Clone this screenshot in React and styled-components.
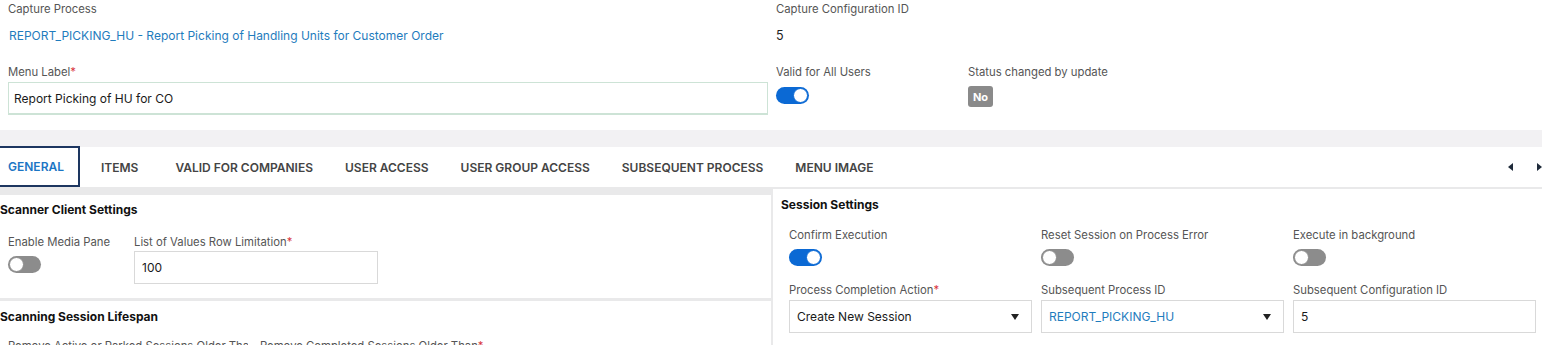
import React from "react";
import styled, { createGlobalStyle } from "styled-components";

const GlobalStyle = createGlobalStyle`
  html, body {
    margin: 0;
    padding: 0;
    background: #ffffff;
    font-family: Inter, "Noto Sans", "Liberation Sans", sans-serif;
    overflow: hidden;
  }
`;

const Page = styled.div`
  width: 1542px;
  height: 345px;
  overflow: hidden;
  background: #ffffff;
`;

const Header = styled.div`
  display: grid;
  grid-template-columns: 760px 1fr;
  column-gap: 8px;
  row-gap: 17px;
  padding: 1px 0 15px 8px;
  height: 114px;
`;

const Field = styled.div`
  display: flex;
  flex-direction: column;
  width: ${(p) => p.width || "auto"};
`;

const Label = styled.div`
  font-size: 11.3px;
  line-height: 16px;
  color: #555555;
  white-space: nowrap;
  overflow: hidden;
`;

const Req = styled.span`
  color: #d9363e;
`;

const Value = styled.div`
  margin-top: 8px;
  font-size: ${(p) => (p.link ? "12px" : "12.5px")};
  line-height: 22px;
  color: ${(p) => (p.link ? "#1f7cbd" : "#222222")};
  padding-left: ${(p) => (p.link ? "1px" : "0")};
`;

const Input = styled.div`
  box-sizing: border-box;
  margin-top: ${(p) => p.mt || "2px"};
  height: 33px;
  width: ${(p) => p.width || "100%"};
  border: 1px solid ${(p) => (p.focused ? "#cde3d6" : "#d9d9d9")};
  border-bottom-width: ${(p) => (p.focused ? "2px" : "1px")};
  display: flex;
  align-items: center;
  justify-content: space-between;
  padding: 0 12px 0 ${(p) => p.pl || "7px"};
  font-size: 12px;
  color: ${(p) => (p.link ? "#1f7cbd" : "#1a1a1a")};
  background: #fff;
`;

const Caret = styled.span`
  width: 0;
  height: 0;
  border-left: 4px solid transparent;
  border-right: 4px solid transparent;
  border-top: 6px solid #222;
`;

const SubRow = styled.div`
  display: flex;
`;

const Toggle = styled.div`
  box-sizing: border-box;
  margin-top: ${(p) => p.mt || "7px"};
  width: 33px;
  height: 17px;
  border-radius: 9px;
  background: ${(p) => (p.on ? "#0b69d4" : "#8c8c8c")};
  position: relative;

  &::after {
    content: "";
    position: absolute;
    top: 1px;
    ${(p) => (p.on ? "right: 1px;" : "left: 1px;")}
    width: 15px;
    height: 15px;
    box-sizing: border-box;
    border-radius: 50%;
    background: #fff;
    border: 1px solid ${(p) => (p.on ? "#0b69d4" : "#8c8c8c")};
  }
`;

const Badge = styled.div`
  margin-top: 6px;
  width: 25px;
  height: 21px;
  border-radius: 3px;
  background: #8a8a8a;
  color: #fff;
  font-size: 11px;
  font-weight: 700;
  display: flex;
  align-items: center;
  justify-content: center;
`;

const Strip = styled.div`
  height: 17px;
  background: #f2f1f3;
`;

const TabBar = styled.div`
  height: 40px;
  display: flex;
  align-items: stretch;
`;

const Tabs = styled.div`
  display: flex;
  margin-left: -8px;
`;

const Tab = styled.div`
  box-sizing: border-box;
  display: flex;
  align-items: center;
  padding: 0 ${(p) => (p.active ? "14px" : "16px")} 0 16px;
  margin-right: ${(p) => p.mr || "0"};
  border: ${(p) => (p.active ? "2px solid #1d3660" : "none")};
  border-left: none;
  margin-top: ${(p) => (p.active ? "-1px" : "0")};
  height: ${(p) => (p.active ? "41px" : "40px")};
  font-size: 12px;
  font-weight: 600;
  color: ${(p) => (p.active ? "#1b75c4" : "#444444")};
  white-space: nowrap;
`;

const Arrows = styled.div`
  margin-left: auto;
  display: flex;
  align-items: center;
  gap: 24px;
`;

const Arrow = styled.span`
  width: 0;
  height: 0;
  border-top: 4px solid transparent;
  border-bottom: 4px solid transparent;
  ${(p) =>
    p.dir === "left"
      ? "border-right: 5px solid #1e2a3a;"
      : "border-left: 5px solid #1e2a3a;"}
`;

const Content = styled.div`
  display: grid;
  grid-template-columns: 771px 1fr;
  column-gap: 2px;
  background: #e9e9ea;
  padding-top: 2px;
  height: 200px;
`;

const Column = styled.div`
  display: flex;
  flex-direction: column;
  gap: 3px;
  padding-top: ${(p) => p.pt || "0"};
`;

const Panel = styled.div`
  background: #fff;
  padding: ${(p) => p.pad || "8px 8px 12px 8px"};
  height: ${(p) => p.h || "auto"};
  flex: ${(p) => (p.grow ? 1 : "none")};
  box-sizing: border-box;
`;

const Title = styled.div`
  font-size: 12px;
  font-weight: 700;
  color: #111;
  line-height: 16px;
`;

const FieldRow = styled.div`
  display: flex;
  gap: ${(p) => p.gap || "9px"};
  margin-top: ${(p) => p.mt || "16px"};
  padding-left: ${(p) => p.pl || "0"};
`;

export default function App() {
  return (
    <Page>
      <GlobalStyle />
      <Header>
        <Field>
          <Label>Capture Process</Label>
          <Value link>
            REPORT_PICKING_HU - Report Picking of Handling Units for Customer Order
          </Value>
        </Field>
        <Field>
          <Label>Capture Configuration ID</Label>
          <Value>5</Value>
        </Field>
        <Field>
          <Label>
            Menu Label<Req>*</Req>
          </Label>
          <Input focused pl="5px">
            Report Picking of HU for CO
          </Input>
        </Field>
        <SubRow>
          <Field width="192px">
            <Label>Valid for All Users</Label>
            <Toggle on />
          </Field>
          <Field>
            <Label>Status changed by update</Label>
            <Badge>No</Badge>
          </Field>
        </SubRow>
      </Header>
      <Strip />
      <TabBar>
        <Tabs>
          <Tab active mr="5px">GENERAL</Tab>
          <Tab mr="5px">ITEMS</Tab>
          <Tab>VALID FOR COMPANIES</Tab>
          <Tab>USER ACCESS</Tab>
          <Tab>USER GROUP ACCESS</Tab>
          <Tab>SUBSEQUENT PROCESS</Tab>
          <Tab>MENU IMAGE</Tab>
        </Tabs>
        <Arrows>
          <Arrow dir="left" />
          <Arrow dir="right" />
        </Arrows>
      </TabBar>
      <Content>
        <Column pt="6px">
          <Panel h="103px" pad="7px 8px 0 0">
            <Title>Scanner Client Settings</Title>
            <FieldRow mt="16px" pl="8px" gap="10px">
              <Field width="116px">
                <Label>Enable Media Pane</Label>
                <Toggle mt="6px" />
              </Field>
              <Field>
                <Label>
                  List of Values Row Limitation<Req>*</Req>
                </Label>
                <Input mt="1px" width="244px">
                  100
                </Input>
              </Field>
            </FieldRow>
          </Panel>
          <Panel grow pad="8px 8px 0 0">
            <Title>Scanning Session Lifespan</Title>
            <FieldRow mt="13px" pl="8px" gap="12px">
              <Field width="240px">
                <Label>Remove Active or Parked Sessions Older Than</Label>
              </Field>
              <Field>
                <Label>
                  Remove Completed Sessions Older Than<Req>*</Req>
                </Label>
              </Field>
            </FieldRow>
          </Panel>
        </Column>
        <Column>
          <Panel grow pad="8px 8px 0 8px">
            <Title>Session Settings</Title>
            <FieldRow mt="14px" pl="8px" gap="9px">
              <Field width="243px">
                <Label>Confirm Execution</Label>
                <Toggle mt="6px" on />
              </Field>
              <Field width="243px">
                <Label>Reset Session on Process Error</Label>
                <Toggle mt="6px" />
              </Field>
              <Field width="243px">
                <Label>Execute in background</Label>
                <Toggle mt="6px" />
              </Field>
            </FieldRow>
            <FieldRow mt="16px" pl="8px" gap="9px">
              <Field width="243px">
                <Label>
                  Process Completion Action<Req>*</Req>
                </Label>
                <Input mt="2px">
                  Create New Session
                  <Caret />
                </Input>
              </Field>
              <Field width="243px">
                <Label>Subsequent Process ID</Label>
                <Input mt="2px" link>
                  REPORT_PICKING_HU
                  <Caret />
                </Input>
              </Field>
              <Field width="243px">
                <Label>Subsequent Configuration ID</Label>
                <Input mt="2px">5</Input>
              </Field>
            </FieldRow>
          </Panel>
        </Column>
      </Content>
    </Page>
  );
}
